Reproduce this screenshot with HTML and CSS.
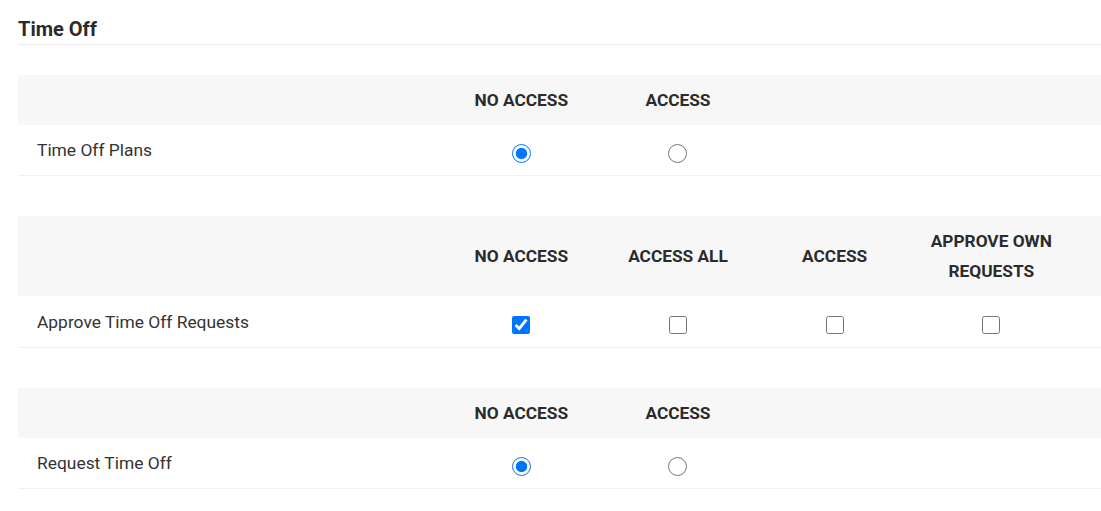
FILE: index.html
```html
<!DOCTYPE html>
<html lang="en">
<head>
<meta charset="utf-8">
<title>Time Off</title>
<link rel="stylesheet" href="styles.css">
</head>
<body>
<section class="section">
  <h2 class="section-title">Time Off</h2>

  <div class="perm-table">
    <div class="perm-head">
      <div class="cell label-cell"></div>
      <div class="cell head-cell">NO ACCESS</div>
      <div class="cell head-cell">ACCESS</div>
      <div class="cell"></div>
      <div class="cell"></div>
      <div class="cell"></div>
    </div>
    <div class="perm-row">
      <div class="cell label-cell">Time Off Plans</div>
      <div class="cell ctrl-cell"><input class="radio" type="radio" name="plans" checked></div>
      <div class="cell ctrl-cell"><input class="radio" type="radio" name="plans"></div>
      <div class="cell"></div>
      <div class="cell"></div>
      <div class="cell"></div>
    </div>
  </div>

  <div class="perm-table">
    <div class="perm-head">
      <div class="cell label-cell"></div>
      <div class="cell head-cell">NO ACCESS</div>
      <div class="cell head-cell">ACCESS ALL</div>
      <div class="cell head-cell">ACCESS</div>
      <div class="cell head-cell">APPROVE OWN REQUESTS</div>
      <div class="cell"></div>
    </div>
    <div class="perm-row tall">
      <div class="cell label-cell">Approve Time Off Requests</div>
      <div class="cell ctrl-cell"><input class="check" type="checkbox" checked></div>
      <div class="cell ctrl-cell"><input class="check" type="checkbox"></div>
      <div class="cell ctrl-cell"><input class="check" type="checkbox"></div>
      <div class="cell ctrl-cell"><input class="check" type="checkbox"></div>
      <div class="cell"></div>
    </div>
  </div>

  <div class="perm-table">
    <div class="perm-head">
      <div class="cell label-cell"></div>
      <div class="cell head-cell">NO ACCESS</div>
      <div class="cell head-cell">ACCESS</div>
      <div class="cell"></div>
      <div class="cell"></div>
      <div class="cell"></div>
    </div>
    <div class="perm-row">
      <div class="cell label-cell">Request Time Off</div>
      <div class="cell ctrl-cell"><input class="radio" type="radio" name="request" checked></div>
      <div class="cell ctrl-cell"><input class="radio" type="radio" name="request"></div>
      <div class="cell"></div>
      <div class="cell"></div>
      <div class="cell"></div>
    </div>
  </div>
</section>
</body>
</html>
```

FILE: styles.css
```css
html, body {
  margin: 0;
  padding: 0;
  background: #ffffff;
}

body {
  font-family: Roboto, "Liberation Sans", Arial, sans-serif;
  color: #333333;
  overflow: hidden;
}

.section {
  margin-left: 18px;
  padding-top: 17px;
}

.section-title {
  margin: 0 0 30px 0;
  font-size: 20px;
  line-height: 24px;
  font-weight: 700;
  color: #2a2a2a;
  padding-bottom: 3px;
  border-bottom: 1px solid #ebebeb;
}

.perm-table {
  margin-bottom: 40px;
}

.perm-head,
.perm-row {
  display: grid;
  grid-template-columns: 425px repeat(4, 156.67px) 1fr;
}

.perm-head {
  background: #f7f7f7;
  min-height: 50px;
}

.perm-row {
  height: 50px;
  border-bottom: 1px solid #f0f0f0;
}

.perm-row.tall {
  height: 51px;
}

.cell {
  display: flex;
  align-items: center;
}

.label-cell {
  padding-left: 19px;
  font-size: 17.4px;
  line-height: 20px;
  color: #333333;
}

.head-cell {
  justify-content: center;
  text-align: center;
  padding: 10px 12px;
  font-size: 17.3px;
  line-height: 30px;
  font-weight: 700;
  color: #2b2b2b;
}

.ctrl-cell {
  justify-content: center;
}

.radio {
  width: 19px;
  height: 19px;
  margin: 7px 0 0 0;
  accent-color: #0075ff;
}

.check {
  width: 18px;
  height: 18px;
  margin: 6px 0 0 0;
  accent-color: #0075ff;
}
```
